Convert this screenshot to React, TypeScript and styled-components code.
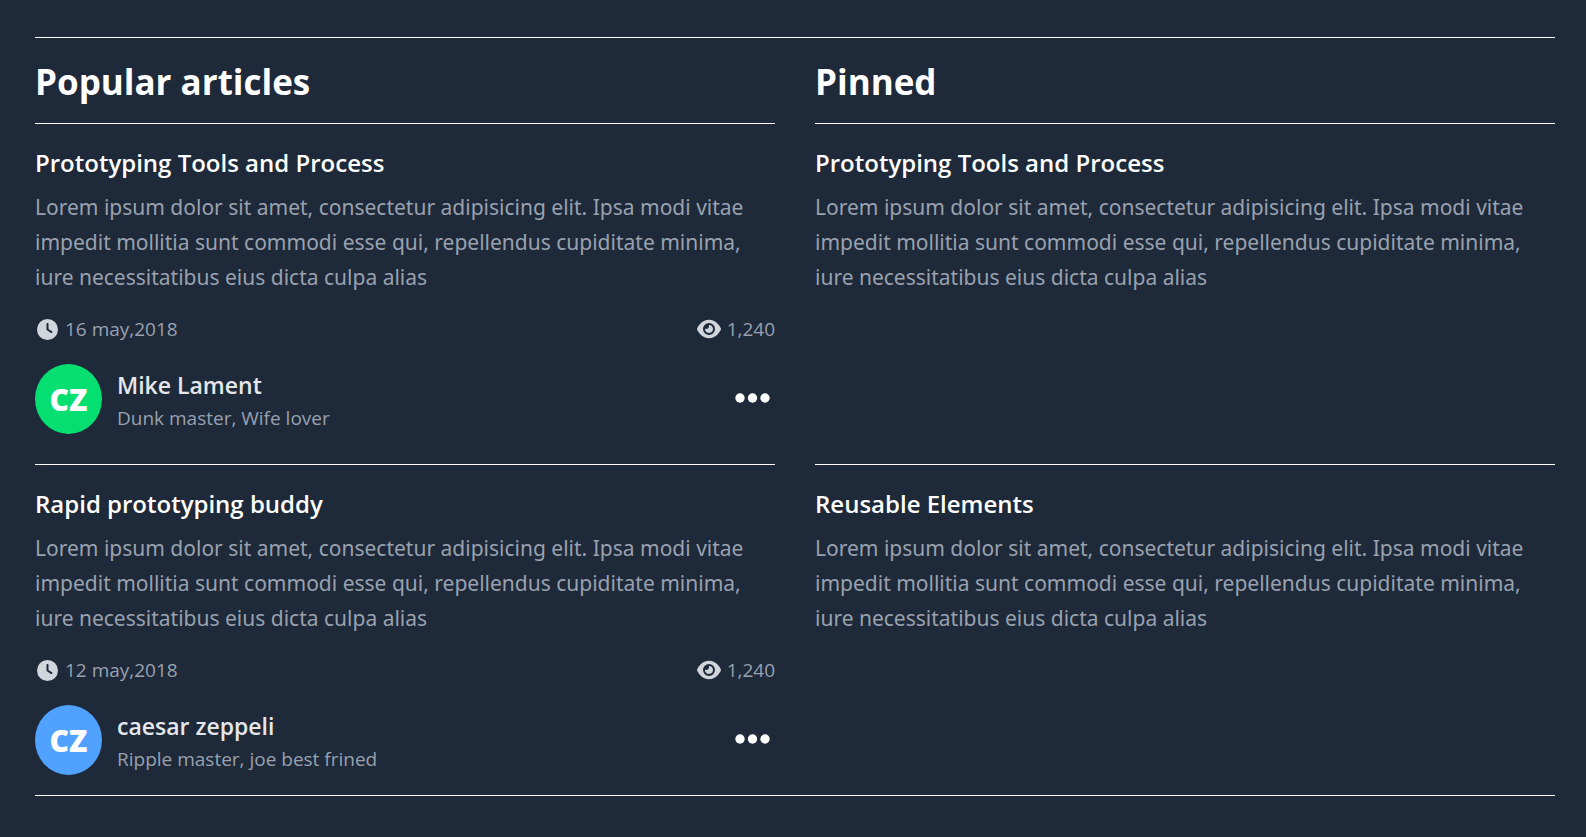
import React from "react";
import styled, { createGlobalStyle } from "styled-components";
import { FaClock, FaEye } from "react-icons/fa6";

const GlobalStyle = createGlobalStyle`
  *, *::before, *::after { box-sizing: border-box; }
  body {
    margin: 0;
    background: #1e2939;
    font-family: "Open Sans", "Noto Sans", sans-serif;
    color: #fff;
  }
  h1, h2, h3, p { margin: 0; }
`;

const Page = styled.main`
  padding: 37px 31px 40px 35px;
`;

const Board = styled.div`
  display: grid;
  grid-template-columns: 1fr 1fr;
  column-gap: 40px;
  border-top: 1px solid #fff;
  border-bottom: 1px solid #fff;
`;

const Heading = styled.h1`
  padding: 17px 0 15px;
  font-size: 35px;
  line-height: 53px;
  font-weight: 700;
`;

const Article = styled.article<{ $last?: boolean }>`
  border-top: 1px solid #fff;
  padding: 19px 0 ${(p) => (p.$last ? 20 : 30)}px;
`;

const Title = styled.h2`
  font-size: 24px;
  line-height: 40px;
  font-weight: 600;
`;

const Excerpt = styled.p`
  margin-top: 7px;
  font-family: "Noto Sans", "Open Sans", sans-serif;
  font-size: 21px;
  line-height: 35px;
  color: #99a1af;
`;

const Meta = styled.div`
  display: flex;
  justify-content: space-between;
  margin-top: 19px;
  font-size: 19px;
  line-height: 30px;
  color: #99a1af;
`;

const MetaItem = styled.span`
  display: flex;
  align-items: center;
  gap: 6px;
`;

const MetaIcon = styled.span`
  display: flex;
  justify-content: center;
  width: 24px;
  color: #d1d5dc;
`;

const Author = styled.div`
  display: flex;
  align-items: center;
  gap: 15px;
  margin-top: 20px;
`;

const Avatar = styled.div<{ $color: string }>`
  display: grid;
  place-items: center;
  width: 67px;
  height: 70px;
  border-radius: 50%;
  background: ${(p) => p.$color};
  font-size: 30px;
  font-weight: 800;
`;

const Name = styled.h3`
  padding-top: 4px;
  font-size: 23px;
  line-height: 34px;
  font-weight: 600;
  color: #e5e7eb;
`;

const Role = styled.p`
  font-size: 19px;
  line-height: 32px;
  color: #99a1af;
`;

const MoreButton = styled.button`
  display: flex;
  margin-left: auto;
  padding: 0 5px 3px 0;
  border: 0;
  background: none;
  color: #fff;
  cursor: pointer;
`;

const text =
  "Lorem ipsum dolor sit amet, consectetur adipisicing elit. Ipsa modi vitae impedit mollitia sunt commodi esse qui, repellendus cupiditate minima, iure necessitatibus eius dicta culpa alias";

const articles = [
  { title: "Prototyping Tools and Process", pinned: "Prototyping Tools and Process", date: "16 may,2018", color: "#05df72", name: "Mike Lament", role: "Dunk master, Wife lover" },
  { title: "Rapid prototyping buddy", pinned: "Reusable Elements", date: "12 may,2018", color: "#51a2ff", name: "caesar zeppeli", role: "Ripple master, joe best frined" },
];

export default function App() {
  return (
    <>
      <GlobalStyle />
      <Page>
        <Board>
          <Heading>Popular articles</Heading>
          <Heading>Pinned</Heading>
          {articles.map((a, i) => (
            <React.Fragment key={a.date}>
              <Article $last={i === 1}>
                <Title>{a.title}</Title>
                <Excerpt>{text}</Excerpt>
                <Meta>
                  <MetaItem>
                    <MetaIcon><FaClock size={21} /></MetaIcon>
                    {a.date}
                  </MetaItem>
                  <MetaItem>
                    <MetaIcon><FaEye size={24} /></MetaIcon>
                    1,240
                  </MetaItem>
                </Meta>
                <Author>
                  <Avatar $color={a.color}>CZ</Avatar>
                  <div>
                    <Name>{a.name}</Name>
                    <Role>{a.role}</Role>
                  </div>
                  <MoreButton aria-label="More options">
                    <svg width="35" height="10" viewBox="0 0 35 10" fill="currentColor">
                      <circle cx="5" cy="5" r="4.7" />
                      <circle cx="17.5" cy="5" r="4.7" />
                      <circle cx="30" cy="5" r="4.7" />
                    </svg>
                  </MoreButton>
                </Author>
              </Article>
              <Article $last={i === 1}>
                <Title>{a.pinned}</Title>
                <Excerpt>{text}</Excerpt>
              </Article>
            </React.Fragment>
          ))}
        </Board>
      </Page>
    </>
  );
}
